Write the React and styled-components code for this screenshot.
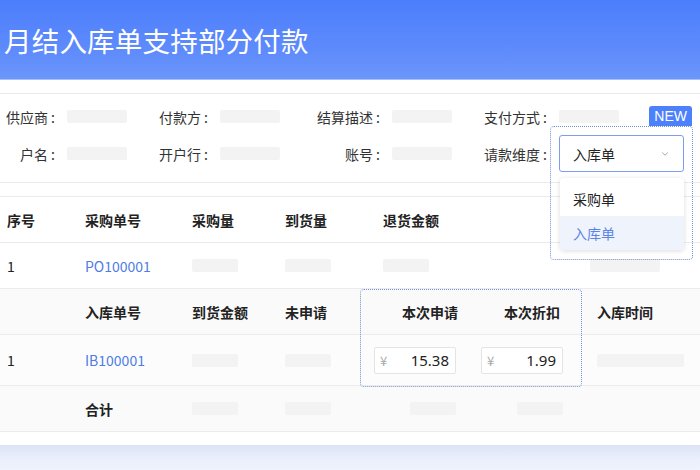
import styled, { createGlobalStyle } from "styled-components";

const GlobalStyle = createGlobalStyle`
  html, body {
    margin: 0;
    padding: 0;
    background: #ffffff;
  }
  body {
    font-family: "Noto Sans CJK SC", "Noto Sans", sans-serif;
    color: #222;
    overflow: hidden;
  }
  * {
    box-sizing: border-box;
  }
`;

const Page = styled.div`
  width: 700px;
  height: 470px;
  display: flex;
  flex-direction: column;
  overflow: hidden;
`;

const Header = styled.header`
  height: 80px;
  flex-shrink: 0;
  background: linear-gradient(180deg, #4c7efc 0%, #5d8afc 60%, #6b96fa 100%);
  border-bottom: 1px solid #a8c0f7;
  display: flex;
  align-items: center;
  padding: 0 0 0 4px;

  > h1 {
    margin: 0;
    font-size: 27.5px;
    font-weight: 400;
    color: #fff;
    letter-spacing: 0.2px;
  }
`;

const InfoCard = styled.section`
  margin-top: 13px;
  border-top: 1px solid #ebebeb;
  border-bottom: 1px solid #ebebeb;
  padding: 4px 0 10px;
  position: relative;
  display: grid;
  grid-template-columns: 55px 60px 69px 60px 88px 60px 83px 125px;
  grid-template-rows: 37px 37px;
  column-gap: 12px;
  align-items: center;
`;

const Label = styled.span`
  text-align: right;
  font-size: 14px;
  color: #333;
  white-space: nowrap;
`;

const Blank = styled.span`
  display: block;
  width: ${(p) => p.$w || 60}px;
  height: 13px;
  background: #f3f3f3;
  border-radius: 2px;
`;

const Badge = styled.span`
  position: absolute;
  right: 8px;
  top: 12px;
  height: 20px;
  padding: 0 5px;
  background: #4d80fb;
  color: #fff;
  font-family: "Liberation Sans", Arial, sans-serif;
  font-size: 14px;
  line-height: 20px;
  border-radius: 3px 3px 0 0;
`;

const SelectWrap = styled.div`
  position: relative;
  width: 125px;
  height: 37px;
`;

const SelectBox = styled.div`
  height: 37px;
  border: 1.5px solid #7d9def;
  border-radius: 3px;
  background: #fff;
  display: flex;
  align-items: center;
  justify-content: space-between;
  padding: 0 12px 0 13px;
  font-size: 14px;
  color: #222;
`;

const Menu = styled.ul`
  position: absolute;
  left: 1px;
  top: 43px;
  width: 124px;
  margin: 0;
  padding: 4px 0 0;
  list-style: none;
  background: #fff;
  border-radius: 4px;
  box-shadow: 0 1px 5px rgba(0, 0, 0, 0.14);
  z-index: 3;
  overflow: hidden;
`;

const Option = styled.li`
  height: 34px;
  display: flex;
  align-items: center;
  padding-left: 13px;
  font-size: 14px;
  color: ${(p) => (p.$active ? "#5b84e8" : "#222")};
  background: ${(p) => (p.$active ? "#eef3fc" : "transparent")};
`;

const DottedFrame = styled.div`
  position: absolute;
  border: 1.5px dotted #6f90d8;
  border-radius: 4px;
  pointer-events: none;
  z-index: 4;
`;

const SelectFrame = styled(DottedFrame)`
  left: -9px;
  top: -9px;
  width: 143px;
  height: 134px;
`;

const Table = styled.section`
  margin-top: 13px;
  border-top: 1px solid #ebebeb;
  position: relative;
`;

const Row = styled.div`
  display: grid;
  grid-template-columns: ${(p) => p.$cols};
  height: ${(p) => p.$h || 46}px;
  align-items: center;
  border-bottom: 1px solid #ebebeb;
  background: ${(p) => p.$bg || "#fff"};
`;

const Cell = styled.div`
  display: flex;
  align-items: center;
  justify-content: ${(p) => (p.$right ? "flex-end" : "flex-start")};
  padding: ${(p) => p.$pad || "0 0 0 7px"};
  font-size: 14px;
  font-weight: ${(p) => (p.$head ? 600 : 400)};
  color: ${(p) => (p.$link ? "#4f7de6" : "#222")};
  white-space: nowrap;
`;

const SubBlock = styled.div`
  position: relative;
`;

const ColumnFrame = styled(DottedFrame)`
  left: 360px;
  top: 0;
  width: 222px;
  height: 98px;
`;

const MoneyInput = styled.div`
  width: 82px;
  height: 27px;
  border: 1px solid #e4e4e4;
  border-radius: 2px;
  background: #fff;
  display: flex;
  align-items: center;
  justify-content: space-between;
  padding: 0 6px 0 5px;
  font-size: 14px;

  > i {
    font-style: normal;
    color: #aaa;
    font-size: 13px;
  }
  > span {
    color: #222;
    font-family: "Noto Sans", sans-serif;
    font-size: 15px;
  }
`;

const Footer = styled.div`
  margin-top: 13px;
  flex: 1;
  background: linear-gradient(180deg, #dbe3f5 0%, #e9eefb 50%, #eff3fe 100%);
`;

const Chevron = () => (
  <svg width="12" height="12" viewBox="0 0 12 12" fill="none">
    <path d="M3.5 4.8 L6 7.2 L8.5 4.8" stroke="#aaa" strokeWidth="1" strokeLinecap="round" strokeLinejoin="round" />
  </svg>
);

const MAIN_COLS = "78px 107px 93px 98px 207px 1fr";
const SUB_COLS = "78px 107px 93px 88px 100px 107px 1fr";

export default function App() {
  return (
    <Page>
      <GlobalStyle />
      <Header>
        <h1>月结入库单支持部分付款</h1>
      </Header>

      <InfoCard>
        <Label>供应商 :</Label>
        <Blank />
        <Label>付款方 :</Label>
        <Blank />
        <Label>结算描述 :</Label>
        <Blank />
        <Label>支付方式 :</Label>
        <Blank />

        <Label>户名 :</Label>
        <Blank />
        <Label>开户行 :</Label>
        <Blank />
        <Label>账号 :</Label>
        <Blank />
        <Label>请款维度 :</Label>
        <SelectWrap>
          <SelectBox>
            <span>入库单</span>
            <Chevron />
          </SelectBox>
          <Menu>
            <Option>采购单</Option>
            <Option $active>入库单</Option>
          </Menu>
          <SelectFrame />
        </SelectWrap>
        <Badge>NEW</Badge>
      </InfoCard>

      <Table>
        <Row $cols={MAIN_COLS}>
          <Cell $head>序号</Cell>
          <Cell $head>采购单号</Cell>
          <Cell $head>采购量</Cell>
          <Cell $head>到货量</Cell>
          <Cell $head>退货金额</Cell>
          <Cell />
        </Row>
        <Row $cols={MAIN_COLS}>
          <Cell>1</Cell>
          <Cell $link>PO100001</Cell>
          <Cell><Blank $w={46} /></Cell>
          <Cell><Blank $w={46} /></Cell>
          <Cell><Blank $w={46} /></Cell>
          <Cell><Blank $w={70} /></Cell>
        </Row>

        <SubBlock>
          <Row $cols={SUB_COLS} $bg="#fafafa">
            <Cell />
            <Cell $head>入库单号</Cell>
            <Cell $head>到货金额</Cell>
            <Cell $head>未申请</Cell>
            <Cell $head $right $pad="0 8px 0 0">本次申请</Cell>
            <Cell $head $right $pad="0 13px 0 0">本次折扣</Cell>
            <Cell $head $pad="0 0 0 24px">入库时间</Cell>
          </Row>
          <Row $cols={SUB_COLS} $bg="#fcfcfc" $h={51}>
            <Cell>1</Cell>
            <Cell $link>IB100001</Cell>
            <Cell><Blank $w={46} /></Cell>
            <Cell><Blank $w={46} /></Cell>
            <Cell $right $pad="0 10px 0 0">
              <MoneyInput><i>¥</i><span>15.38</span></MoneyInput>
            </Cell>
            <Cell $right $pad="0 10px 0 0">
              <MoneyInput><i>¥</i><span>1.99</span></MoneyInput>
            </Cell>
            <Cell $pad="0 0 0 24px"><Blank $w={87} /></Cell>
          </Row>
          <ColumnFrame />
        </SubBlock>
        <Row $cols={SUB_COLS} $bg="#fafafa">
          <Cell />
          <Cell $head>合计</Cell>
          <Cell><Blank $w={46} /></Cell>
          <Cell><Blank $w={46} /></Cell>
          <Cell $right $pad="0 10px 0 0"><Blank $w={46} /></Cell>
          <Cell $right $pad="0 10px 0 0"><Blank $w={46} /></Cell>
          <Cell />
        </Row>
      </Table>

      <Footer />
    </Page>
  );
}
